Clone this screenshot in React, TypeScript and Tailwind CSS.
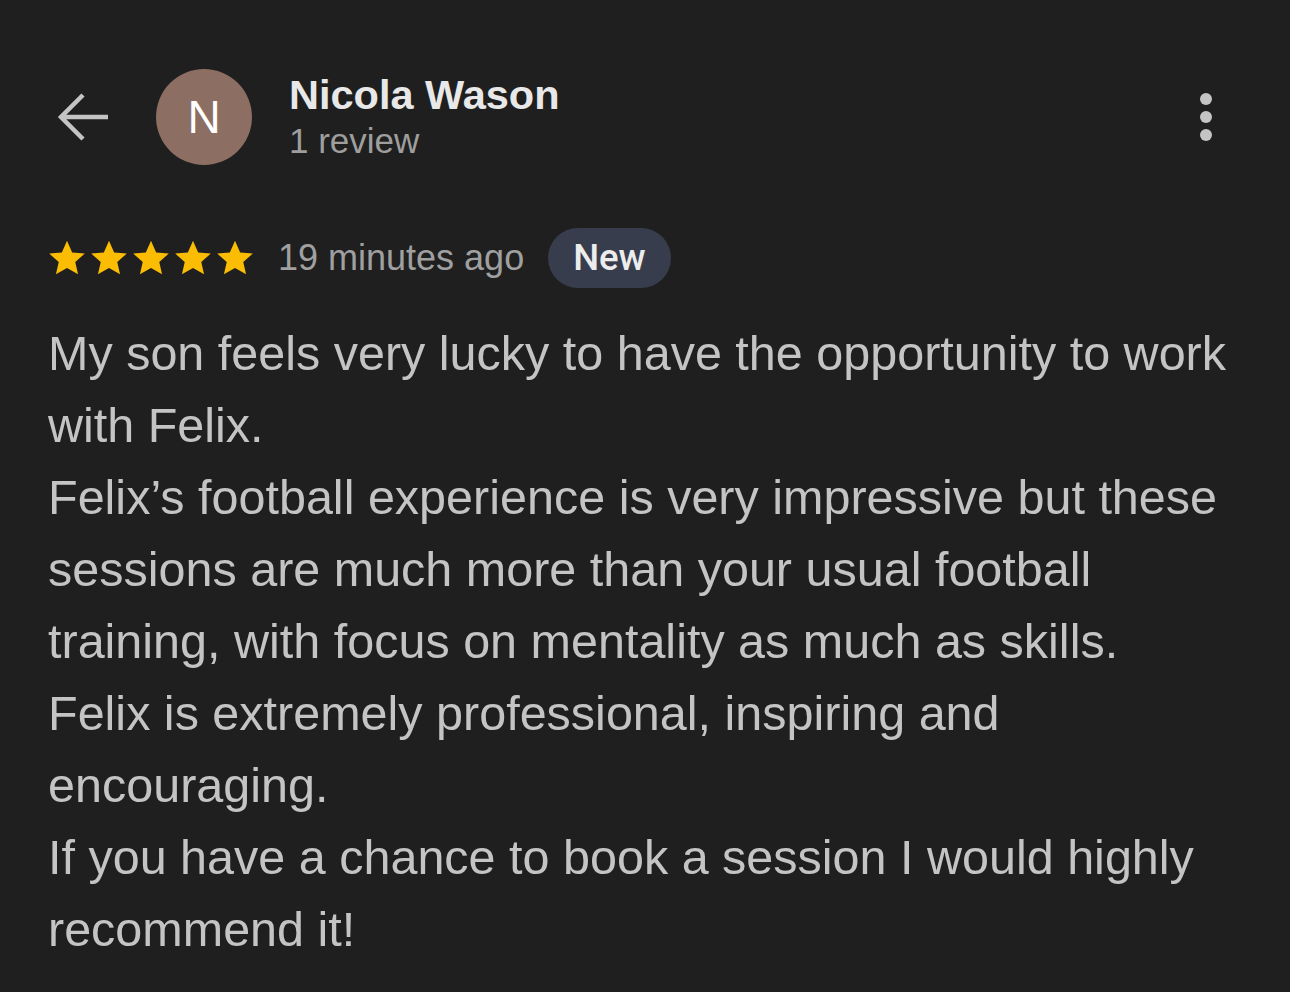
import React from "react";

const Star = () => (
  <svg width="42" height="42" viewBox="0 0 24 24" className="block">
    <path
      d="M12 2.2l2.95 6.6 7.2.68-5.43 4.8 1.6 7.06L12 17.66l-6.32 3.68 1.6-7.06L1.85 9.48l7.2-.68L12 2.2z"
      fill="#fbbc04"
    />
  </svg>
);

const lines = [
  "My son feels very lucky to have the opportunity to work",
  "with Felix.",
  "Felix\u2019s football experience is very impressive but these",
  "sessions are much more than your usual football",
  "training, with focus on mentality as much as skills.",
  "Felix is extremely professional, inspiring and",
  "encouraging.",
  "If you have a chance to book a session I would highly",
  "recommend it!",
];

export default function App() {
  return (
    <div
      className="w-[1290px] h-[992px] bg-[#1f1f1f] overflow-hidden"
      style={{ fontFamily: '"Liberation Sans", Arial, sans-serif' }}
    >
      <div className="flex items-center h-[96px] mt-[69px] pl-[56px] pr-[78px]">
        <svg width="56" height="56" viewBox="0 0 56 56" className="block">
          <path
            d="M52 28H5M27 6L5 28l22 22"
            stroke="#c4c4c4"
            strokeWidth="4.5"
            fill="none"
            strokeLinejoin="miter"
          />
        </svg>
        <div className="ml-[44px] w-[96px] h-[96px] rounded-full bg-[#8d6e63] flex items-center justify-center text-[46px] text-white leading-none">
          N
        </div>
        <div className="ml-[37px] flex flex-col">
          <div className="text-[41.5px] leading-[48px] font-bold text-[#e8e8e8]">Nicola Wason</div>
          <div className="text-[35px] leading-[44px] text-[#9e9e9e]">1 review</div>
        </div>
        <div className="ml-auto flex flex-col items-center gap-[6px]">
          <div className="w-[12px] h-[12px] rounded-full bg-[#c4c4c4]" />
          <div className="w-[12px] h-[12px] rounded-full bg-[#c4c4c4]" />
          <div className="w-[12px] h-[12px] rounded-full bg-[#c4c4c4]" />
        </div>
      </div>

      <div className="flex items-center mt-[63px] pl-[46px] h-[60px]">
        <div className="flex">
          <Star />
          <Star />
          <Star />
          <Star />
          <Star />
        </div>
        <div className="ml-[22px] text-[36px] text-[#a0a0a0] leading-none">19 minutes ago</div>
        <div className="ml-[24px] h-[60px] px-[25px] rounded-full bg-[#383d4d] flex items-center text-[36.5px] text-[#ececec] leading-none">
          <span style={{ fontFamily: 'Roboto, "Liberation Sans", sans-serif', fontWeight: 500 }}>New</span>
        </div>
      </div>

      <div className="mt-[29px] pl-[48px] text-[48.5px] leading-[72px] text-[#c4c4c4]">
        {lines.map((l, i) => (
          <div key={i} className="whitespace-nowrap">
            {l}
          </div>
        ))}
      </div>
    </div>
  );
}
